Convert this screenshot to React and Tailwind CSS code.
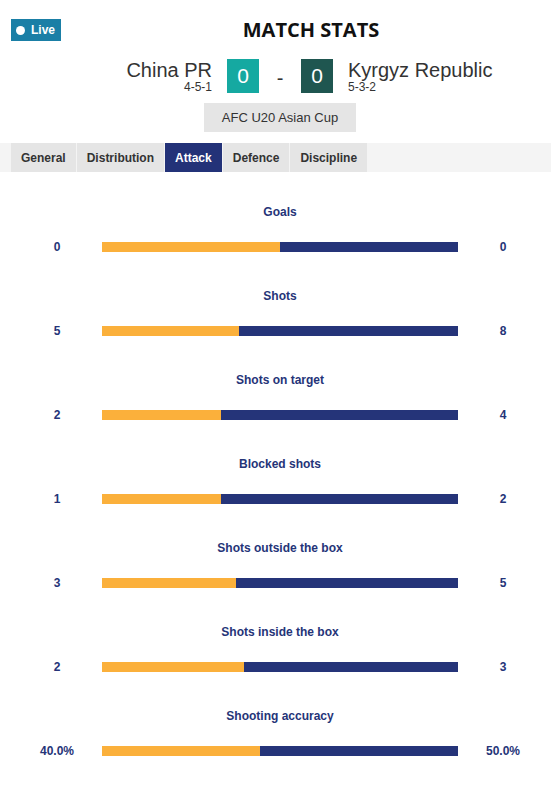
import React from 'react'

const stats = [
  { label: 'Goals', home: '0', away: '0', h: 0, a: 0 },
  { label: 'Shots', home: '5', away: '8', h: 5, a: 8 },
  { label: 'Shots on target', home: '2', away: '4', h: 2, a: 4 },
  { label: 'Blocked shots', home: '1', away: '2', h: 1, a: 2 },
  { label: 'Shots outside the box', home: '3', away: '5', h: 3, a: 5 },
  { label: 'Shots inside the box', home: '2', away: '3', h: 2, a: 3 },
  { label: 'Shooting accuracy', home: '40.0%', away: '50.0%', h: 40, a: 50 },
]

const tabs = ['General', 'Distribution', 'Attack', 'Defence', 'Discipline']

function StatRow({ stat }) {
  const total = stat.h + stat.a
  const pct = total === 0 ? 50 : (stat.h / total) * 100

  return (
    <div className="flex flex-col">
      <div className="text-center text-[12px] leading-[16px] font-bold text-[#253478]">
        {stat.label}
      </div>
      {/* numbers + bar */}
      <div className="mt-[19px] flex items-center justify-center h-[16px]">
        <div className="w-[90px] text-center text-[12px] leading-[16px] font-bold text-[#253478]">
          {stat.home}
        </div>
        <div className="w-[356px] h-[10px] flex">
          <div className="h-full bg-[#fbb03b]" style={{ width: `${pct}%` }} />
          <div className="h-full flex-1 bg-[#253479]" />
        </div>
        <div className="w-[90px] text-center text-[12px] leading-[16px] font-bold text-[#253478]">
          {stat.away}
        </div>
      </div>
    </div>
  )
}

export default function App() {
  return (
    <div className="w-[551px] min-h-[792px] bg-white font-['Liberation_Sans',Arial,sans-serif]">
      {/* Header */}
      <div className="flex items-center pt-[16px] h-[44px]">
        <div className="ml-[11px] w-[50px] h-[22px] bg-[#1a7fa6] flex items-center pl-[5px]">
          <span className="w-[9px] h-[9px] rounded-full bg-white" />
          <span className="ml-[6px] text-white text-[12px] font-bold leading-none">Live</span>
        </div>
        <h1 className="flex-1 pl-[10px] text-center font-['Open_Sans',sans-serif] font-bold text-[20px] leading-[28px] text-[#111]">
          MATCH STATS
        </h1>
      </div>

      <div className="pl-[9px]">
        {/* Teams and score */}
        <div className="mt-[15px] flex items-start">
          <div className="flex-1 flex flex-col items-end pr-[15px] text-[#333]">
            <div className="text-[20px] leading-[22px]">China PR</div>
            <div className="text-[12px] leading-[12px]">4-5-1</div>
          </div>
          <div className="flex items-center">
            <div className="w-[32px] h-[34px] bg-[#15a9a1] text-white text-[21px] flex items-center justify-center">0</div>
            <div className="w-[42px] text-center text-[20px] text-[#333] pt-[4px]">-</div>
            <div className="w-[32px] h-[34px] bg-[#1f5650] text-white text-[21px] flex items-center justify-center">0</div>
          </div>
          <div className="flex-1 flex flex-col items-start pl-[15px] text-[#333]">
            <div className="text-[20px] leading-[22px]">Kyrgyz Republic</div>
            <div className="text-[12px] leading-[12px]">5-3-2</div>
          </div>
        </div>

        {/* Competition */}
        <div className="mt-[10px] flex justify-center">
          <div className="w-[152px] h-[29px] bg-[#e5e5e5] flex items-center justify-center text-[13px] text-[#333]">
            AFC U20 Asian Cup
          </div>
        </div>
      </div>

      {/* Tabs */}
      <div className="mt-[11px] -ml-0 h-[29px] bg-[#f4f4f4] flex pl-[11px] gap-px">
        {tabs.map((t) => (
          <div
            key={t}
            className={
              t === 'Attack'
                ? 'px-[10px] h-full flex items-center bg-[#233278] text-white text-[12px] font-bold'
                : 'px-[10px] h-full flex items-center bg-[#e5e5e5] text-[#333] text-[12px] font-bold'
            }
          >
            {t}
          </div>
        ))}
      </div>

      {/* Stats */}
      <div className="pl-[9px] mt-[32px] flex flex-col gap-[33px]">
        {stats.map((s) => (
          <StatRow key={s.label} stat={s} />
        ))}
      </div>
    </div>
  )
}
